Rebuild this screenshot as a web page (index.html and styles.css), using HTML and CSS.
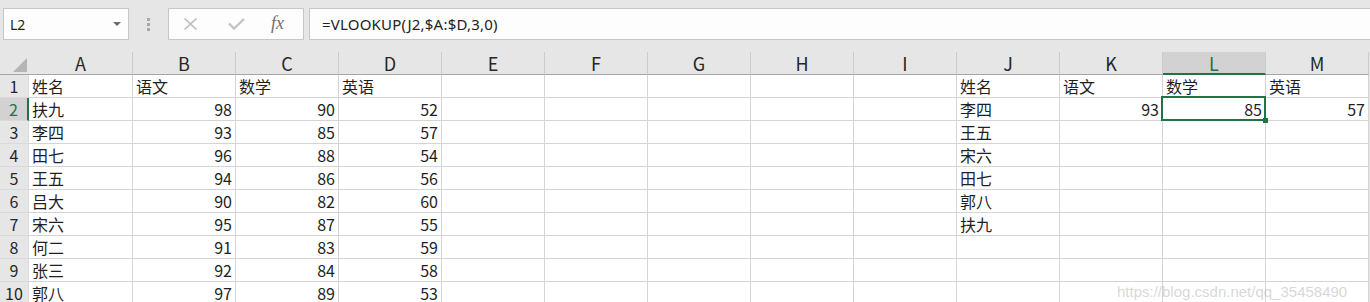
FILE: index.html
```html
<!DOCTYPE html>
<html lang="zh-CN">
<head>
    <meta charset="UTF-8">
    <title>VLOOKUP</title>
    <link rel="stylesheet" href="styles.css">
</head>
<body>
    <div class="topbar">
        <div class="namebox">
            <span class="ref">L2</span>
            <span class="caret"></span>
        </div>
        <div class="grip"><i></i><i></i><i></i></div>
        <div class="fxbox">
            <svg class="icon-x" width="15" height="12" viewBox="0 0 15 12">
                <path d="M1.5 0.5 L13.5 11.5 M13.5 0.5 L1.5 11.5" stroke="#bdbdbd" stroke-width="1.6" fill="none"/>
            </svg>
            <svg class="icon-ok" width="17" height="12" viewBox="0 0 17 12">
                <path d="M1 5.5 L6 10.5 L16 1" stroke="#c4c4c4" stroke-width="2.4" fill="none"/>
            </svg>
            <span class="fx">fx</span>
        </div>
        <div class="formula">=VLOOKUP(J2,$A:$D,3,0)</div>
    </div>

    <div class="sheet">
        <!-- column headers -->
        <div class="corner">
            <svg width="14" height="14" viewBox="0 0 14 14"><path d="M14 0 L14 14 L0 14 Z" fill="#b5b5b5"/></svg>
        </div>
        <div class="colhead">A</div>
        <div class="colhead">B</div>
        <div class="colhead">C</div>
        <div class="colhead">D</div>
        <div class="colhead">E</div>
        <div class="colhead">F</div>
        <div class="colhead">G</div>
        <div class="colhead">H</div>
        <div class="colhead">I</div>
        <div class="colhead">J</div>
        <div class="colhead">K</div>
        <div class="colhead active">L</div>
        <div class="colhead">M</div>

        <!-- row 1 -->
        <div class="rowhead">1</div>
        <div class="cell">姓名</div><div class="cell">语文</div><div class="cell">数学</div><div class="cell">英语</div>
        <div class="cell"></div><div class="cell"></div><div class="cell"></div><div class="cell"></div><div class="cell"></div>
        <div class="cell">姓名</div><div class="cell">语文</div><div class="cell">数学</div><div class="cell">英语</div>

        <!-- row 2 -->
        <div class="rowhead active">2</div>
        <div class="cell">扶九</div><div class="cell num">98</div><div class="cell num">90</div><div class="cell num">52</div>
        <div class="cell"></div><div class="cell"></div><div class="cell"></div><div class="cell"></div><div class="cell"></div>
        <div class="cell">李四</div><div class="cell num">93</div><div class="cell num selected">85</div><div class="cell num">57</div>

        <!-- row 3 -->
        <div class="rowhead">3</div>
        <div class="cell">李四</div><div class="cell num">93</div><div class="cell num">85</div><div class="cell num">57</div>
        <div class="cell"></div><div class="cell"></div><div class="cell"></div><div class="cell"></div><div class="cell"></div>
        <div class="cell">王五</div><div class="cell"></div><div class="cell"></div><div class="cell"></div>

        <!-- row 4 -->
        <div class="rowhead">4</div>
        <div class="cell">田七</div><div class="cell num">96</div><div class="cell num">88</div><div class="cell num">54</div>
        <div class="cell"></div><div class="cell"></div><div class="cell"></div><div class="cell"></div><div class="cell"></div>
        <div class="cell">宋六</div><div class="cell"></div><div class="cell"></div><div class="cell"></div>

        <!-- row 5 -->
        <div class="rowhead">5</div>
        <div class="cell">王五</div><div class="cell num">94</div><div class="cell num">86</div><div class="cell num">56</div>
        <div class="cell"></div><div class="cell"></div><div class="cell"></div><div class="cell"></div><div class="cell"></div>
        <div class="cell">田七</div><div class="cell"></div><div class="cell"></div><div class="cell"></div>

        <!-- row 6 -->
        <div class="rowhead">6</div>
        <div class="cell">吕大</div><div class="cell num">90</div><div class="cell num">82</div><div class="cell num">60</div>
        <div class="cell"></div><div class="cell"></div><div class="cell"></div><div class="cell"></div><div class="cell"></div>
        <div class="cell">郭八</div><div class="cell"></div><div class="cell"></div><div class="cell"></div>

        <!-- row 7 -->
        <div class="rowhead">7</div>
        <div class="cell">宋六</div><div class="cell num">95</div><div class="cell num">87</div><div class="cell num">55</div>
        <div class="cell"></div><div class="cell"></div><div class="cell"></div><div class="cell"></div><div class="cell"></div>
        <div class="cell">扶九</div><div class="cell"></div><div class="cell"></div><div class="cell"></div>

        <!-- row 8 -->
        <div class="rowhead">8</div>
        <div class="cell">何二</div><div class="cell num">91</div><div class="cell num">83</div><div class="cell num">59</div>
        <div class="cell"></div><div class="cell"></div><div class="cell"></div><div class="cell"></div><div class="cell"></div>
        <div class="cell"></div><div class="cell"></div><div class="cell"></div><div class="cell"></div>

        <!-- row 9 -->
        <div class="rowhead">9</div>
        <div class="cell">张三</div><div class="cell num">92</div><div class="cell num">84</div><div class="cell num">58</div>
        <div class="cell"></div><div class="cell"></div><div class="cell"></div><div class="cell"></div><div class="cell"></div>
        <div class="cell"></div><div class="cell"></div><div class="cell"></div><div class="cell"></div>

        <!-- row 10 -->
        <div class="rowhead">10</div>
        <div class="cell">郭八</div><div class="cell num">97</div><div class="cell num">89</div><div class="cell num">53</div>
        <div class="cell"></div><div class="cell"></div><div class="cell"></div><div class="cell"></div><div class="cell"></div>
        <div class="cell"></div><div class="cell"></div><div class="cell"></div><div class="cell"></div>
    </div>

    <div class="watermark">https://blog.csdn.net/qq_35458490</div>
</body>
</html>
```

FILE: styles.css
```css
:root {
    --bar: #e6e6e6;
    --box-border: #c6c6c6;
    --grid: #d4d4d4;
    --green: #217346;
    --head-active: #d2d2d2;
    --text: #1f1f1f;
}

body {
    margin: 0;
    background: var(--bar);
    overflow: hidden;
    font-family: "Noto Sans CJK SC", "Noto Sans", sans-serif;
    color: var(--text);
}

/* formula bar */
.topbar {
    height: 52px;
    box-sizing: border-box;
    padding: 8px 0 0 3px;
    display: flex;
    align-items: flex-start;
}

.namebox,
.fxbox,
.formula {
    height: 32px;
    box-sizing: border-box;
    background: #fdfdfd;
    border: 1px solid var(--box-border);
    display: flex;
    align-items: center;
}

.namebox {
    width: 126px;
    justify-content: space-between;
    padding: 0 7px 0 6px;
}

.ref {
    font-family: "Noto Sans", sans-serif;
    font-size: 14px;
    color: #222;
}

.caret {
    width: 0;
    height: 0;
    border-left: 4px solid transparent;
    border-right: 4px solid transparent;
    border-top: 4px solid #6b6b6b;
}

.grip {
    width: 39px;
    height: 32px;
    display: flex;
    flex-direction: column;
    align-items: center;
    justify-content: center;
    gap: 2px;
}

.grip i {
    width: 3px;
    height: 3px;
    background: #a8a8a8;
}

.fxbox {
    width: 136px;
    padding-left: 14px;
}

.icon-ok {
    margin-left: 30px;
}

.fx {
    margin-left: 26px;
    font-family: "Liberation Serif", serif;
    font-style: italic;
    font-size: 18px;
    color: #707070;
    margin-top: -2px;
}

.formula {
    flex: 1;
    margin-left: 5px;
    border-right: none;
    padding-left: 12px;
    font-family: "Noto Sans", sans-serif;
    font-size: 15px;
    letter-spacing: 0.2px;
    color: #222;
}

/* sheet grid */
.sheet {
    display: grid;
    grid-template-columns: 29px 104px repeat(12, 103px);
    grid-auto-rows: 23px;
}

.corner,
.colhead,
.rowhead,
.cell {
    box-sizing: border-box;
}

.corner {
    background: var(--bar);
    border-bottom: 1px solid #a6a6a6;
    display: flex;
    justify-content: flex-end;
    align-items: flex-end;
    padding: 0 2px 2px 0;
}

.colhead {
    background: var(--bar);
    border-right: 1px solid #cbcbcb;
    border-bottom: 1px solid #a6a6a6;
    text-align: center;
    font-size: 18px;
    line-height: 22px;
    color: #262626;
}

.colhead.active {
    background: var(--head-active);
    color: var(--green);
    border-bottom: 2px solid var(--green);
}

.rowhead {
    background: var(--bar);
    border-bottom: 1px solid #dadada;
    border-right: 1px solid #dadada;
    text-align: center;
    font-size: 16px;
    line-height: 18px;
    padding-top: 2px;
    color: #262626;
}

.rowhead.active {
    background: var(--head-active);
    color: var(--green);
    border-right: 2px solid var(--green);
}

.cell {
    background: #fff;
    border-right: 1px solid var(--grid);
    border-bottom: 1px solid var(--grid);
    font-size: 16px;
    line-height: 18px;
    padding: 2px 3px 0;
    white-space: nowrap;
    position: relative;
}

.cell.num {
    text-align: right;
}

.cell.selected::after {
    content: "";
    position: absolute;
    top: -2px;
    left: -2px;
    right: -1px;
    bottom: -1px;
    border: 2px solid var(--green);
    pointer-events: none;
}

.cell.selected::before {
    content: "";
    position: absolute;
    right: -3px;
    bottom: -3px;
    width: 5px;
    height: 5px;
    background: var(--green);
    z-index: 1;
}

.watermark {
    position: absolute;
    left: 1117px;
    top: 283px;
    font-family: "Liberation Sans", sans-serif;
    font-size: 15px;
    color: rgba(175, 175, 175, 0.5);
    pointer-events: none;
}
```
